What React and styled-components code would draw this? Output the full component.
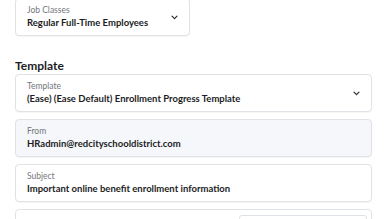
import React from 'react';
import styled, { createGlobalStyle } from 'styled-components';

const Global = createGlobalStyle`
  html, body { margin: 0; padding: 0; background: #ffffff; overflow: hidden; }
  body { font-family: Lato, "Open Sans", sans-serif; color: #1c1d24; }
`;

const Page = styled.div`
  padding: 0 12px 0 15px;
  margin-top: -2px;
`;

const Field = styled.div`
  display: flex;
  align-items: center;
  box-sizing: border-box;
  width: ${props => props.narrow ? '175px' : '100%'};
  height: 38px;
  padding: 0 11px 0 11px;
  border: 1px solid #dfe2e6;
  border-radius: 4px;
  background: ${props => props.filled ? '#f5f7fa' : '#ffffff'};
  box-shadow: 0 1px 1px rgba(0, 0, 0, 0.04);
  margin-bottom: ${props => props.gap || 7}px;
`;

const FieldText = styled.div`
  flex: 1;
  display: flex;
  flex-direction: column;
`;

const Label = styled.span`
  font-size: 8.5px;
  line-height: 11px;
  color: #74767c;
`;

const Value = styled.span`
  font-size: 9.5px;
  line-height: 14px;
  font-weight: 700;
  color: #1c1d24;
`;

const Heading = styled.h2`
  margin: 0 0 1px;
  font-size: 12px;
  line-height: 15px;
  font-weight: 700;
  color: #1c1d24;
`;

const Toolbar = styled.div`
  display: flex;
  justify-content: flex-end;
  box-sizing: border-box;
  height: 38px;
  padding: 5px 4px 0 0;
  border: 1px solid #dfe2e6;
  border-radius: 4px;
`;

const ToolButton = styled.div`
  width: 126px;
  height: 20px;
  border: 1px solid #dfe2e6;
  border-radius: 3px;
`;

const Chevron = () => (
  <svg width="7" height="5" viewBox="0 0 7 5" fill="none">
    <path d="M1 1.2 L3.5 3.7 L6 1.2" stroke="#2a2b31" strokeWidth="1.2" strokeLinecap="round" strokeLinejoin="round" />
  </svg>
);

export default function App() {
  return (
    <>
      <Global />
      <Page>
        <Field narrow gap={22}>
          <FieldText>
            <Label>Job Classes</Label>
            <Value>Regular Full-Time Employees</Value>
          </FieldText>
          <Chevron />
        </Field>
        <Heading>Template</Heading>
        <Field>
          <FieldText>
            <Label>Template</Label>
            <Value>(Ease) (Ease Default) Enrollment Progress Template</Value>
          </FieldText>
          <Chevron />
        </Field>
        <Field filled>
          <FieldText>
            <Label>From</Label>
            <Value>HRadmin@redcityschooldistrict.com</Value>
          </FieldText>
        </Field>
        <Field>
          <FieldText>
            <Label>Subject</Label>
            <Value>Important online benefit enrollment information</Value>
          </FieldText>
        </Field>
        <Toolbar>
          <ToolButton />
        </Toolbar>
      </Page>
    </>
  );
}
